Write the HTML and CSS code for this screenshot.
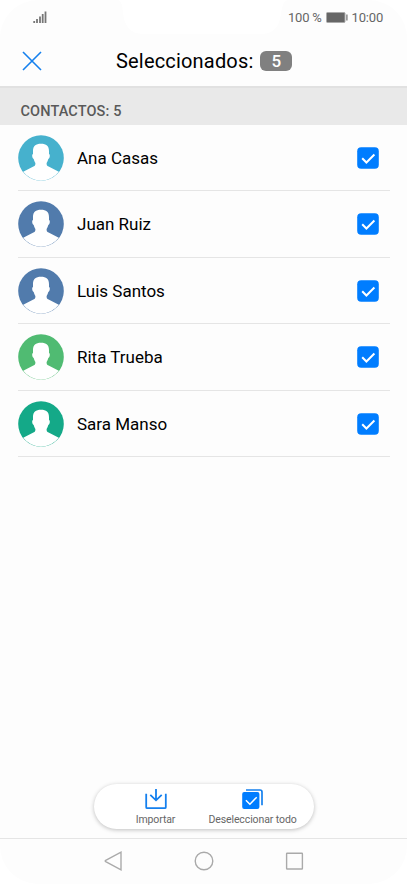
FILE: index.html
```html
<!DOCTYPE html>
<html lang="es">
<head>
<meta charset="UTF-8">
<meta name="viewport" content="width=device-width, initial-scale=1.0">
<title>Seleccionados</title>
<link rel="stylesheet" href="styles.css">
</head>
<body>

<!-- shared shapes -->
<svg class="defs" width="0" height="0">
  <symbol id="avatar" viewBox="0 0 46 46">
    <circle cx="23" cy="23" r="22.8" fill="currentColor"/>
    <path fill="#fff" d="M23 8.700c5.500 0 8.200 2.500 8 8v2.300c1.300.3 1 4.200-.7 5-.5 1.800-1 3-1.700 4 0 2.200.2 2.700 2 3.500L40.800 36.800A22.300 22.300 0 0 1 5.200 36.800L15.400 31.500c1.800-.8 2-1.300 2-3.500-.7-1-1.200-2.200-1.700-4-1.700-.8-2-4.700-.7-5v-2.300c-.2-5.500 2.500-8 8-8z"/>
  </symbol>
  <symbol id="check" viewBox="0 0 22 22">
    <rect x=".2" y=".2" width="21.600" height="21.600" rx="4" fill="#007dff"/>
    <path d="M5.200 11.200l4.200 4.300 8-8" fill="none" stroke="#fff" stroke-width="2"/>
  </symbol>
</svg>

<div class="screen">
  <div class="status-bar">
    <svg class="signal" width="14" height="12" viewBox="0 0 14 12">
      <path d="M1.200 12v-2M4 12V8M7 12V5.500M9.700 12V3M12.500 12V.5" stroke="#777" stroke-width="1.800"/>
    </svg>
    <div class="notch">
      <svg width="170" height="35" viewBox="0 0 170 35">
        <path d="M0 0c4 2 4.500 6 5 13 1 12 7 21 20 21h117c15 0 19-8 21-20 1-7 2-12 6-14z" fill="#fff"/>
      </svg>
    </div>
    <div class="status-right">
      <span>100 %</span>
      <svg class="battery" width="22" height="11" viewBox="0 0 22 11">
        <rect x=".5" y=".5" width="18.500" height="10" rx="1" fill="#666" stroke="#aaa"/>
        <path d="M20.900 2.500v6" stroke="#777" stroke-width="1.300"/>
      </svg>
      <span>10:00</span>
    </div>
  </div>

  <div class="title-bar">
    <svg class="close" width="20" height="20" viewBox="0 0 20 20">
      <path d="M1 1l18 18M19 1L1 19" stroke="#1580ee" stroke-width="1.600"/>
    </svg>
    <div class="title">Seleccionados:</div>
    <div class="count">5</div>
  </div>

  <div class="section-title">CONTACTOS: 5</div>

  <div class="contacts">
    <div class="contact">
      <svg class="avatar cyan"><use href="#avatar"/></svg>
      <div class="name">Ana Casas</div>
      <svg class="check"><use href="#check"/></svg>
    </div>
    <div class="contact">
      <svg class="avatar blue"><use href="#avatar"/></svg>
      <div class="name">Juan Ruiz</div>
      <svg class="check"><use href="#check"/></svg>
    </div>
    <div class="contact">
      <svg class="avatar blue"><use href="#avatar"/></svg>
      <div class="name">Luis Santos</div>
      <svg class="check"><use href="#check"/></svg>
    </div>
    <div class="contact">
      <svg class="avatar green"><use href="#avatar"/></svg>
      <div class="name">Rita Trueba</div>
      <svg class="check"><use href="#check"/></svg>
    </div>
    <div class="contact">
      <svg class="avatar teal"><use href="#avatar"/></svg>
      <div class="name">Sara Manso</div>
      <svg class="check"><use href="#check"/></svg>
    </div>
  </div>

  <div class="actions">
    <div class="action">
      <svg width="22" height="22" viewBox="0 0 22 22" fill="none" stroke="#1580ee" stroke-width="1.800">
        <path d="M1.200 4.700v13.500q0 1 1 1h17.600q1 0 1-1V4.700M11 0v11M5.300 5.800l5.700 5.500 5.700-5.500"/>
      </svg>
      <span>Importar</span>
    </div>
    <div class="action">
      <svg width="22" height="22" viewBox="0 0 22 22" fill="none">
        <path d="M4 1h14q2 0 2 2v13.300" stroke="#1580ee" stroke-width="1.700"/>
        <rect x=".2" y="3" width="17.200" height="17" rx="2" fill="#007dff"/>
        <path d="M3.900 11.200l4 4 6.800-7" stroke="#fff" stroke-width="1.500"/>
      </svg>
      <span>Deseleccionar todo</span>
    </div>
  </div>

  <div class="nav-bar">
    <svg width="20" height="20" viewBox="0 0 20 20"><path d="M17 1.200v17.600L1.700 10.600q-1-.6 0-1.200z"/></svg>
    <svg width="20" height="20" viewBox="0 0 20 20"><circle cx="10" cy="10" r="8.800"/></svg>
    <svg width="20" height="20" viewBox="0 0 20 20"><rect x="2.600" y="2.200" width="15.800" height="15.800" rx=".5"/></svg>
  </div>
</div>

</body>
</html>
```
FILE: styles.css
```css
body {
  margin: 0;
  background-color: #fff;
  font-family: Roboto, sans-serif;
  color: #000;
}

svg {
  display: block;
  flex-shrink: 0;
}

.defs {
  position: absolute;
}

.screen {
  display: flex;
  flex-direction: column;
  width: 407px;
  height: 884px;
  background-color: #fdfdfd;
  border-radius: 38px;
  overflow: hidden;
}

/* Status bar */
.status-bar {
  display: flex;
  justify-content: space-between;
  height: 34px;
  padding: 0 24px 0 33px;
  flex-shrink: 0;
}

.signal {
  margin-top: 11px;
}

.notch {
  margin-left: 51px;
  margin-right: -20px;
}

.status-right {
  display: flex;
  align-items: center;
  height: 35px;
  font-size: 13px;
  letter-spacing: -0.2px;
  color: #666;
}

.battery {
  margin: 0 4px;
}

/* Title */
.title-bar {
  display: flex;
  align-items: center;
  box-sizing: border-box;
  height: 52px;
  padding: 2px 22px 0;
  flex-shrink: 0;
}

.title {
  margin-left: 74px;
  font-size: 20px;
  letter-spacing: 0.18px;
  line-height: 50px;
}

.count {
  width: 32px;
  height: 20px;
  margin-left: 7px;
  border-radius: 6px;
  background-color: #808080;
  color: #fff;
  font-size: 17px;
  font-weight: 500;
  line-height: 21px;
  text-align: center;
}

.section-title {
  box-sizing: border-box;
  height: 38.5px;
  padding: 5px 20.5px 0;
  border-top: 2px solid #e1e1e1;
  background-color: #e9e9e9;
  color: #595959;
  font-size: 14.5px;
  font-weight: 500;
  letter-spacing: 0.12px;
  line-height: 37px;
  flex-shrink: 0;
}

/* Contact list */
.contacts {
  padding: 0 17px 0 18px;
}

.contact {
  display: flex;
  align-items: center;
  box-sizing: border-box;
  height: 66.5px;
  padding: 1px 11px 0 0;
  border-bottom: 1px solid #e5e5e5;
}

.avatar {
  width: 46px;
  height: 46px;
}

.cyan { color: #46b1cd; }
.blue { color: #517bac; }
.green { color: #50bb72; }
.teal { color: #14a988; }

.name {
  flex: 1;
  margin-left: 13px;
  font-size: 17px;
}

.check {
  width: 22px;
  height: 22px;
}

/* Floating action bar */
.actions {
  display: grid;
  grid-template-columns: 97px 97px;
  justify-content: center;
  box-sizing: border-box;
  width: 220px;
  height: 45px;
  margin: auto auto 9px 94px;
  padding-top: 5px;
  border-radius: 23px;
  background-color: #fff;
  box-shadow: 0 1px 4px rgba(0, 0, 0, 0.25);
}

.action {
  display: flex;
  flex-direction: column;
  align-items: center;
  color: #666;
  font-size: 10.5px;
  letter-spacing: -0.1px;
  line-height: 12px;
  white-space: nowrap;
}

.action span {
  margin-top: 3px;
}

/* System navigation */
.nav-bar {
  display: flex;
  justify-content: space-between;
  align-items: center;
  box-sizing: border-box;
  height: 46px;
  padding: 0 103px 2px 104px;
  border-top: 1px solid #e5e5e5;
  flex-shrink: 0;
}

.nav-bar svg {
  fill: none;
  stroke: #aaa;
  stroke-width: 1.4;
}
```
